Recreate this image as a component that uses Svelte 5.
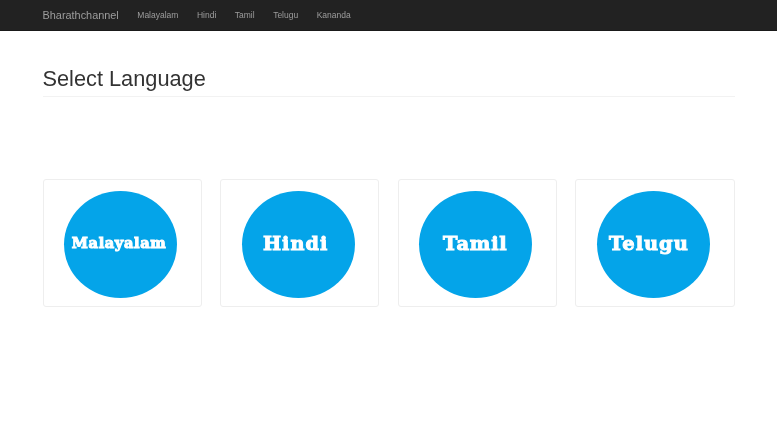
<script>
  const links = ['Malayalam', 'Hindi', 'Tamil', 'Telugu', 'Kananda'];
  const cards = [
    { name: 'Malayalam', size: 14.6, spacing: 0.6, shift: -1.5, rise: 1 },
    { name: 'Hindi', size: 19.2, spacing: 1.1, shift: -2.5, rise: 1 },
    { name: 'Tamil', size: 19.4, spacing: 0.8, shift: -0.5, rise: 1 },
    { name: 'Telugu', size: 19.4, spacing: 1, shift: -4.5, rise: 1 }
  ];
</script>

<div class="page">
  <nav class="navbar">
    <a class="brand" href="#top">Bharathchannel</a>
    <ul class="nav-links">
      {#each links as link}
        <li><a href="#top">{link}</a></li>
      {/each}
    </ul>
  </nav>

  <main class="container">
    <h1>Select Language</h1>
    <div class="grid">
      {#each cards as card}
        <a class="thumbnail" href="#top">
          <span class="disc">
            <span class="label" style="font-size:{card.size}px;letter-spacing:{card.spacing}px;transform:translate({card.shift}px,{-card.rise}px)">{card.name}</span>
          </span>
        </a>
      {/each}
    </div>
  </main>
</div>

<style>
  :global(body) {
    margin: 0;
    background: #fff;
    font-family: "Liberation Sans", Arial, sans-serif;
    color: #333;
  }
  a {
    text-decoration: none;
  }
  .page {
    min-height: 423px;
    filter: blur(0.35px);
    background: #fff;
  }
  .navbar {
    display: flex;
    align-items: center;
    height: 31px;
    padding: 0 42.5px;
    background: #222;
    border-bottom: 1px solid #1a1a1a;
    box-sizing: border-box;
  }
  .brand {
    color: #9d9d9d;
    font-size: 10.9px;
    margin-right: 18.5px;
  }
  .nav-links {
    display: flex;
    gap: 18.5px;
    list-style: none;
    margin: 0;
    padding: 0 0 1px;
  }
  .nav-links a {
    display: block;
    color: #9d9d9d;
    font-size: 8.5px;
  }
  .container {
    padding: 0 42.5px;
  }
  h1 {
    margin: 34px 0 0;
    padding-bottom: 3px;
    font-size: 21.75px;
    font-weight: 400;
    line-height: 28px;
    color: #333;
    border-bottom: 1px solid #f2f2f2;
  }
  .grid {
    display: grid;
    grid-template-columns: repeat(4, 1fr);
    gap: 18.5px;
    margin-top: 82px;
  }
  .thumbnail {
    display: flex;
    align-items: center;
    justify-content: center;
    height: 128px;
    box-sizing: border-box;
    border: 1.5px solid #eee;
    border-radius: 3px;
    background: #fff;
  }
  .disc {
    display: flex;
    align-items: center;
    justify-content: center;
    width: 113px;
    height: 107px;
    border-radius: 50%;
    background: #04a4e9;
    margin: 3px 3px 0 0;
  }
  .label {
    font-family: "DejaVu Serif", serif;
    font-weight: 700;
    color: #fff;
    -webkit-text-stroke: 1px #fff;
    white-space: nowrap;
    line-height: 1;
  }
</style>
